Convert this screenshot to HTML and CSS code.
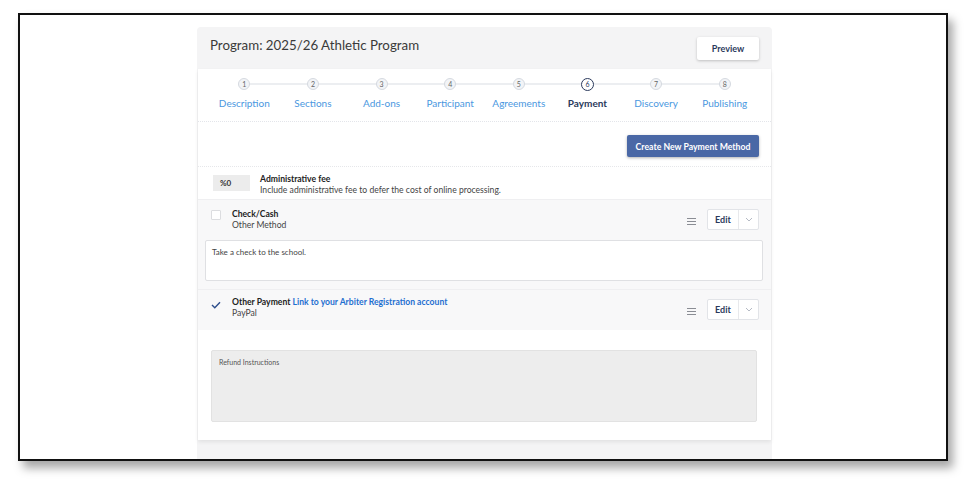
FILE: index.html
```html
<!DOCTYPE html>
<html lang="en">
<head>
    <meta charset="UTF-8">
    <title>Program: 2025/26 Athletic Program</title>
    <link rel="stylesheet" href="styles.css">
</head>
<body>
    <div class="frame">
        <div class="column">
            <div class="header">
                <h1>Program: 2025/26 Athletic Program</h1>
                <button class="preview">Preview</button>
            </div>
            <div class="panel">
                <div class="stepper">
                    <div class="step"><span class="dot">1</span><span class="label">Description</span></div>
                    <div class="step"><span class="dot">2</span><span class="label">Sections</span></div>
                    <div class="step"><span class="dot">3</span><span class="label">Add-ons</span></div>
                    <div class="step"><span class="dot">4</span><span class="label">Participant</span></div>
                    <div class="step"><span class="dot">5</span><span class="label">Agreements</span></div>
                    <div class="step active"><span class="dot">6</span><span class="label">Payment</span></div>
                    <div class="step"><span class="dot">7</span><span class="label">Discovery</span></div>
                    <div class="step last"><span class="dot">8</span><span class="label">Publishing</span></div>
                </div>

                <div class="actions">
                    <button class="create">Create New Payment Method</button>
                </div>

                <div class="fee">
                    <div class="fee-input">%0</div>
                    <div class="fee-text">
                        <div class="title">Administrative fee</div>
                        <div class="sub">Include administrative fee to defer the cost of online processing.</div>
                    </div>
                </div>

                <div class="method">
                    <div class="method-head">
                        <span class="checkbox"></span>
                        <div class="method-text">
                            <div class="title">Check/Cash</div>
                            <div class="sub">Other Method</div>
                        </div>
                        <span class="handle"><i></i><i></i><i></i></span>
                        <div class="edit-group">
                            <span class="edit">Edit</span>
                            <span class="caret"><svg width="8" height="5" viewBox="0 0 8 5"><path d="M1 1l3 3 3-3" fill="none" stroke="#b5bac4" stroke-width="1"/></svg></span>
                        </div>
                    </div>
                    <div class="note">Take a check to the school.</div>
                </div>

                <div class="method second">
                    <div class="method-head">
                        <span class="check"><svg width="10" height="8" viewBox="0 0 10 8"><path d="M1 4l2.8 2.8L9 1.2" fill="none" stroke="#2d4e8c" stroke-width="1.4"/></svg></span>
                        <div class="method-text">
                            <div class="title">Other Payment <a href="#">Link to your Arbiter Registration account</a></div>
                            <div class="sub">PayPal</div>
                        </div>
                        <span class="handle"><i></i><i></i><i></i></span>
                        <div class="edit-group">
                            <span class="edit">Edit</span>
                            <span class="caret"><svg width="8" height="5" viewBox="0 0 8 5"><path d="M1 1l3 3 3-3" fill="none" stroke="#b5bac4" stroke-width="1"/></svg></span>
                        </div>
                    </div>
                </div>

                <div class="refund-wrap">
                    <div class="refund">Refund Instructions</div>
                </div>
            </div>
        </div>
    </div>
</body>
</html>
```

FILE: styles.css
```css
* {
    margin: 0;
    padding: 0;
    box-sizing: border-box;
}
html, body {
    width: 100%;
    height: 100%;
    overflow: hidden;
}
body {
    background: #fff;
    font-family: Lato, "Open Sans", sans-serif;
    color: #333;
}
.frame {
    margin: 13px 0 0 18px;
    width: 930px;
    height: 448px;
    border: 2px solid #111;
    background: #fff;
    box-shadow: 5px 7px 9px rgba(0, 0, 0, 0.35);
    padding: 12px 0 0 177px;
    overflow: hidden;
}
.column {
    width: 575px;
    height: 100%;
    background: #f4f4f5;
    border-radius: 4px 4px 0 0;
}
.header {
    height: 42px;
    display: flex;
    align-items: center;
    justify-content: space-between;
    padding: 0 13px;
}
.header h1 {
    font-size: 13.3px;
    font-weight: 400;
    color: #3a3a3a;
    margin-top: -6px;
}
.preview {
    width: 62px;
    height: 23px;
    background: #fff;
    border: none;
    border-radius: 2px;
    box-shadow: 0 1px 3px rgba(0, 0, 0, 0.22);
    font-family: inherit;
    font-size: 9px;
    font-weight: 700;
    color: #2b3a5c;
    margin-top: 1px;
}
.panel {
    background: #fff;
    margin: 0 1px;
    height: 371px;
    box-shadow: 0 2px 4px rgba(0, 0, 0, 0.08);
}
.stepper {
    display: flex;
    padding: 9px 12px 0;
    height: 53px;
    border-bottom: 1px dotted #e3e5ea;
}
.step {
    flex: 1;
    display: flex;
    flex-direction: column;
    align-items: center;
    position: relative;
}
.step::after {
    content: "";
    position: absolute;
    top: 5px;
    left: 50%;
    width: 100%;
    height: 2px;
    background: #eceef1;
}
.step.last::after {
    display: none;
}
.dot {
    position: relative;
    z-index: 1;
    width: 12px;
    height: 12px;
    border-radius: 50%;
    border: 1px solid #d5d9e0;
    background: #f2f4f7;
    font-size: 7px;
    line-height: 10px;
    text-align: center;
    color: #666;
}
.label {
    margin-top: 7px;
    font-size: 10px;
    color: #4a97e0;
}
.step.active .dot {
    width: 13px;
    height: 13px;
    border: 1.5px solid #2b3a5c;
    background: #fff;
    color: #2b3a5c;
    line-height: 10px;
    margin-top: -0.5px;
}
.step.active .label {
    color: #2b3a5c;
    font-weight: 700;
    margin-top: 6.5px;
}
.actions {
    display: flex;
    justify-content: flex-end;
    padding: 13px 12px 0;
    height: 45px;
    border-bottom: 1px dotted #e6e7ea;
}
.create {
    width: 132px;
    height: 22px;
    border: none;
    border-radius: 2px;
    background: #4a68a6;
    box-shadow: 0 1px 3px rgba(0, 0, 0, 0.3);
    color: #fff;
    font-family: inherit;
    font-size: 8.7px;
    font-weight: 700;
}
.fee {
    display: flex;
    align-items: center;
    height: 32px;
    padding-left: 15px;
}
.fee-input {
    width: 37px;
    height: 16px;
    background: #ececec;
    font-size: 8px;
    font-weight: 700;
    line-height: 16px;
    padding-left: 7px;
    color: #333;
}
.fee-text {
    margin: 3px 0 0 10px;
}
.title {
    font-size: 8.6px;
    font-weight: 700;
    color: #222;
    line-height: 11px;
}
.title a {
    color: #1f6fd0;
    text-decoration: none;
}
.sub {
    font-size: 8.6px;
    color: #444;
    line-height: 10px;
}
.method {
    background: #f8f8f9;
    border-top: 1px solid #efeff1;
    padding: 8px 12px 8px 7px;
}
.method-head {
    display: flex;
    align-items: center;
    height: 23px;
    padding-left: 6px;
}
.checkbox {
    width: 10px;
    height: 10px;
    border: 1px solid #dcdde0;
    background: #fff;
    border-radius: 1px;
    margin-top: -9px;
}
.check {
    width: 10px;
    height: 10px;
    display: flex;
    align-items: center;
    margin-top: -9px;
}
.method-text {
    margin-left: 11px;
    flex: 1;
    margin-top: 0;
}
.second .method-text {
    margin-top: -4px;
}
.handle {
    display: flex;
    flex-direction: column;
    gap: 2px;
    width: 9px;
    margin-right: 11px;
    margin-top: 3px;
}
.handle i {
    display: block;
    height: 1px;
    background: #8a8d94;
}
.edit-group {
    display: flex;
    height: 21px;
    border: 1px solid #e2e4e8;
    border-radius: 2px;
    background: #fff;
}
.edit {
    width: 31px;
    border-right: 1px solid #e8e9ec;
    font-size: 9px;
    font-weight: 700;
    color: #2b3a5c;
    text-align: center;
    line-height: 19px;
}
.caret {
    width: 19px;
    display: flex;
    align-items: center;
    justify-content: center;
}
.note {
    margin: 9px -4px 0 0;
    height: 41px;
    background: #fff;
    border: 1px solid #dfe0e3;
    border-radius: 2px;
    font-size: 8px;
    color: #444;
    padding: 6px 6px;
}
.second {
    padding-top: 8px;
    padding-bottom: 9px;
}
.refund-wrap {
    padding: 20px 14px 0 13px;
}
.refund {
    height: 72px;
    background: #ededed;
    border: 1px solid #e2e2e2;
    border-radius: 2px;
    font-size: 7px;
    color: #555;
    padding: 7px 7px;
}
```
